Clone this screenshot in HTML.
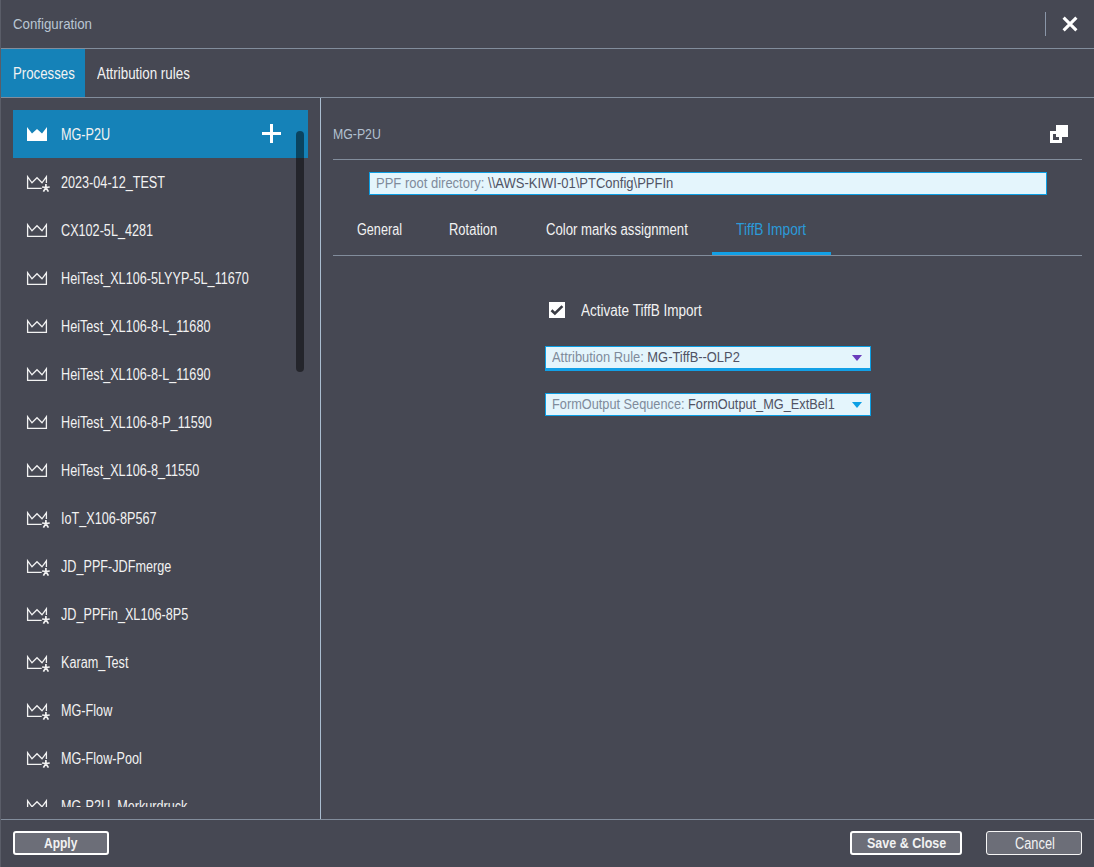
<!DOCTYPE html>
<html><head><meta charset="utf-8">
<style>
*{box-sizing:border-box;margin:0;padding:0}
html,body{width:1094px;height:867px;overflow:hidden;background:#464853}
body{position:relative;font-family:"Liberation Sans",sans-serif;font-size:16px;color:#f2f2f2}
.a{position:absolute}
.t{position:absolute;white-space:nowrap;line-height:16px;transform-origin:0 0;transform:scaleX(0.79)}
.hl{position:absolute;height:1px;background:#828d9c}
.vl{position:absolute;width:1px;background:#868e9b}
.item{position:absolute;left:13px;width:295px;height:48px}
.item .t{left:48px;top:17px}
.item svg{position:absolute;left:13px;top:16px}
.sel{background:#1582b8}
</style></head><body>
<!-- left border -->
<div class="vl" style="left:0;top:0;height:867px;background:#5a5d68"></div>
<!-- title -->
<div class="t" style="left:13px;top:16px;color:#b9c6d3;font-size:15px;transform:scaleX(0.885)">Configuration</div>
<div class="vl" style="left:1045px;top:12px;height:24px;background:#8a96a8"></div>
<svg class="a" style="left:1061px;top:15px" width="18" height="18" viewBox="0 0 18 18"><path d="M2.6 2.6 L15.4 15.4 M15.4 2.6 L2.6 15.4" stroke="#fff" stroke-width="3.1"/></svg>
<div class="hl" style="left:1px;top:48px;width:1093px"></div>
<!-- top tabs -->
<div class="a" style="left:1px;top:49px;width:84px;height:48px;background:#1582b8"></div>
<div class="t" style="left:13px;top:66px;transform:scaleX(0.827)">Processes</div>
<div class="t" style="left:97px;top:66px;transform:scaleX(0.835)">Attribution rules</div>
<div class="hl" style="left:1px;top:97px;width:1093px"></div>
<!-- left panel separator -->
<div class="vl" style="left:320px;top:98px;height:721px;background:#aabdd0"></div>
<!-- list -->
<div id="list">
<div class="a" style="left:0;top:98px;width:320px;height:709px;overflow:hidden">
<div class="item sel" style="top:12px"><svg width="22" height="16" viewBox="0 0 22 16"><path d="M1,15 L1,1 L6,7.5 L11,3 L16,7.5 L21,1 L21,15 Z" fill="#fff"/></svg><div class="t">MG-P2U</div></div>
<div class="item" style="top:60px"><svg width="26" height="20" viewBox="0 0 26 20"><path d="M20.4,9 L20.4,2.8 L16,8.8 L11,3.7 L6,8.8 L1.6,2.8 L1.6,14.3 L15.7,14.3" fill="none" stroke="#f2f2f2" stroke-width="1.3"/><path d="M19.9,9.9 L19.9,13.5 M16.1,13 L19.9,13.5 L23.7,13 M17.4,17.6 L19.9,13.5 L22.4,17.6" fill="none" stroke="#f2f2f2" stroke-width="1.7"/></svg><div class="t">2023-04-12_TEST</div></div>
<div class="item" style="top:108px"><svg width="22" height="16" viewBox="0 0 22 16"><path d="M1.6,14.3 L1.6,2.8 L6,8.8 L11,3.7 L16,8.8 L20.4,2.8 L20.4,14.3 Z" fill="none" stroke="#f2f2f2" stroke-width="1.3"/></svg><div class="t">CX102-5L_4281</div></div>
<div class="item" style="top:156px"><svg width="22" height="16" viewBox="0 0 22 16"><path d="M1.6,14.3 L1.6,2.8 L6,8.8 L11,3.7 L16,8.8 L20.4,2.8 L20.4,14.3 Z" fill="none" stroke="#f2f2f2" stroke-width="1.3"/></svg><div class="t">HeiTest_XL106-5LYYP-5L_11670</div></div>
<div class="item" style="top:204px"><svg width="22" height="16" viewBox="0 0 22 16"><path d="M1.6,14.3 L1.6,2.8 L6,8.8 L11,3.7 L16,8.8 L20.4,2.8 L20.4,14.3 Z" fill="none" stroke="#f2f2f2" stroke-width="1.3"/></svg><div class="t">HeiTest_XL106-8-L_11680</div></div>
<div class="item" style="top:252px"><svg width="22" height="16" viewBox="0 0 22 16"><path d="M1.6,14.3 L1.6,2.8 L6,8.8 L11,3.7 L16,8.8 L20.4,2.8 L20.4,14.3 Z" fill="none" stroke="#f2f2f2" stroke-width="1.3"/></svg><div class="t">HeiTest_XL106-8-L_11690</div></div>
<div class="item" style="top:300px"><svg width="22" height="16" viewBox="0 0 22 16"><path d="M1.6,14.3 L1.6,2.8 L6,8.8 L11,3.7 L16,8.8 L20.4,2.8 L20.4,14.3 Z" fill="none" stroke="#f2f2f2" stroke-width="1.3"/></svg><div class="t">HeiTest_XL106-8-P_11590</div></div>
<div class="item" style="top:348px"><svg width="22" height="16" viewBox="0 0 22 16"><path d="M1.6,14.3 L1.6,2.8 L6,8.8 L11,3.7 L16,8.8 L20.4,2.8 L20.4,14.3 Z" fill="none" stroke="#f2f2f2" stroke-width="1.3"/></svg><div class="t">HeiTest_XL106-8_11550</div></div>
<div class="item" style="top:396px"><svg width="26" height="20" viewBox="0 0 26 20"><path d="M20.4,9 L20.4,2.8 L16,8.8 L11,3.7 L6,8.8 L1.6,2.8 L1.6,14.3 L15.7,14.3" fill="none" stroke="#f2f2f2" stroke-width="1.3"/><path d="M19.9,9.9 L19.9,13.5 M16.1,13 L19.9,13.5 L23.7,13 M17.4,17.6 L19.9,13.5 L22.4,17.6" fill="none" stroke="#f2f2f2" stroke-width="1.7"/></svg><div class="t">IoT_X106-8P567</div></div>
<div class="item" style="top:444px"><svg width="26" height="20" viewBox="0 0 26 20"><path d="M20.4,9 L20.4,2.8 L16,8.8 L11,3.7 L6,8.8 L1.6,2.8 L1.6,14.3 L15.7,14.3" fill="none" stroke="#f2f2f2" stroke-width="1.3"/><path d="M19.9,9.9 L19.9,13.5 M16.1,13 L19.9,13.5 L23.7,13 M17.4,17.6 L19.9,13.5 L22.4,17.6" fill="none" stroke="#f2f2f2" stroke-width="1.7"/></svg><div class="t">JD_PPF-JDFmerge</div></div>
<div class="item" style="top:492px"><svg width="26" height="20" viewBox="0 0 26 20"><path d="M20.4,9 L20.4,2.8 L16,8.8 L11,3.7 L6,8.8 L1.6,2.8 L1.6,14.3 L15.7,14.3" fill="none" stroke="#f2f2f2" stroke-width="1.3"/><path d="M19.9,9.9 L19.9,13.5 M16.1,13 L19.9,13.5 L23.7,13 M17.4,17.6 L19.9,13.5 L22.4,17.6" fill="none" stroke="#f2f2f2" stroke-width="1.7"/></svg><div class="t">JD_PPFin_XL106-8P5</div></div>
<div class="item" style="top:540px"><svg width="26" height="20" viewBox="0 0 26 20"><path d="M20.4,9 L20.4,2.8 L16,8.8 L11,3.7 L6,8.8 L1.6,2.8 L1.6,14.3 L15.7,14.3" fill="none" stroke="#f2f2f2" stroke-width="1.3"/><path d="M19.9,9.9 L19.9,13.5 M16.1,13 L19.9,13.5 L23.7,13 M17.4,17.6 L19.9,13.5 L22.4,17.6" fill="none" stroke="#f2f2f2" stroke-width="1.7"/></svg><div class="t">Karam_Test</div></div>
<div class="item" style="top:588px"><svg width="26" height="20" viewBox="0 0 26 20"><path d="M20.4,9 L20.4,2.8 L16,8.8 L11,3.7 L6,8.8 L1.6,2.8 L1.6,14.3 L15.7,14.3" fill="none" stroke="#f2f2f2" stroke-width="1.3"/><path d="M19.9,9.9 L19.9,13.5 M16.1,13 L19.9,13.5 L23.7,13 M17.4,17.6 L19.9,13.5 L22.4,17.6" fill="none" stroke="#f2f2f2" stroke-width="1.7"/></svg><div class="t">MG-Flow</div></div>
<div class="item" style="top:636px"><svg width="26" height="20" viewBox="0 0 26 20"><path d="M20.4,9 L20.4,2.8 L16,8.8 L11,3.7 L6,8.8 L1.6,2.8 L1.6,14.3 L15.7,14.3" fill="none" stroke="#f2f2f2" stroke-width="1.3"/><path d="M19.9,9.9 L19.9,13.5 M16.1,13 L19.9,13.5 L23.7,13 M17.4,17.6 L19.9,13.5 L22.4,17.6" fill="none" stroke="#f2f2f2" stroke-width="1.7"/></svg><div class="t">MG-Flow-Pool</div></div>
<div class="item" style="top:684px"><svg width="22" height="16" viewBox="0 0 22 16"><path d="M1.6,14.3 L1.6,2.8 L6,8.8 L11,3.7 L16,8.8 L20.4,2.8 L20.4,14.3 Z" fill="none" stroke="#f2f2f2" stroke-width="1.3"/></svg><div class="t">MG-P2U_Merkurdruck</div></div>
</div>
</div>
<!-- plus + scrollbar -->
<div class="a" style="left:262px;top:132px;width:19px;height:3px;background:#fff"></div>
<div class="a" style="left:270px;top:124px;width:3px;height:19px;background:#fff"></div>
<div class="a" style="left:296px;top:131px;width:8px;height:241px;background:rgba(0,0,0,0.48);border-radius:4px"></div>
<!-- right panel -->
<div class="t" style="left:333px;top:126px;color:#b2c0d0;font-size:15px;transform:scaleX(0.82)">MG-P2U</div>
<div class="a" style="left:1050px;top:131px;width:12px;height:12px;border:3px solid #fff"></div>
<div class="a" style="left:1056px;top:125px;width:12px;height:12px;background:#fff"></div>
<div class="hl" style="left:333px;top:159px;width:749px"></div>
<div class="a" style="left:369px;top:172px;width:678px;height:23px;background:#e4f5fc;border:1.5px solid #0c9fe4"></div>
<div class="t" style="left:376px;top:175px;font-size:15px;color:#7f8b9b;transform:scaleX(0.867)">PPF root directory: <span style="color:#505364">\\AWS-KIWI-01\PTConfig\PPFIn</span></div>
<div class="t" style="left:357px;top:222px">General</div>
<div class="t" style="left:449px;top:222px;transform:scaleX(0.81)">Rotation</div>
<div class="t" style="left:546px;top:222px;transform:scaleX(0.822)">Color marks assignment</div>
<div class="t" style="left:736px;top:222px;color:#2b9ad9;transform:scaleX(0.858)">TiffB Import</div>
<div class="hl" style="left:333px;top:255px;width:749px"></div>
<div class="a" style="left:712px;top:252px;width:119px;height:3px;background:#12a0e6"></div>
<!-- checkbox -->
<div class="a" style="left:549px;top:302px;width:16px;height:16px;background:#fff"></div>
<svg class="a" style="left:549px;top:302px" width="16" height="16" viewBox="0 0 16 16"><path d="M2.5,8.2 L5.9,11.5 L13.4,4.1" fill="none" stroke="#3a3c45" stroke-width="2.6"/></svg>
<div class="t" style="left:581px;top:303px;transform:scaleX(0.846)">Activate TiffB Import</div>
<!-- dropdown 1 -->
<div class="a" style="left:545px;top:346px;width:326px;height:25px;background:#e4f5fc;border:1.5px solid #0c9fe4;border-bottom:3px solid #12a0e6"></div>
<div class="t" style="left:552px;top:349px;font-size:15px;color:#7f8b9b;transform:scaleX(0.86)">Attribution Rule: <span style="color:#505364">MG-TiffB--OLP2</span></div>
<svg class="a" style="left:851px;top:354px" width="12" height="8" viewBox="0 0 12 8"><path d="M1,1 L11,1 L6,7 Z" fill="#6a3cbc"/></svg>
<!-- dropdown 2 -->
<div class="a" style="left:545px;top:393px;width:326px;height:23px;background:#e4f5fc;border:1.5px solid #0c9fe4"></div>
<div class="t" style="left:552px;top:396px;font-size:15px;color:#7f8b9b;transform:scaleX(0.85)">FormOutput Sequence: <span style="color:#505364">FormOutput_MG_ExtBel1</span></div>
<svg class="a" style="left:851px;top:401px" width="12" height="8" viewBox="0 0 12 8"><path d="M1,1 L11,1 L6,7 Z" fill="#0c9fe4"/></svg>
<!-- footer -->
<div class="hl" style="left:1px;top:819px;width:1093px"></div>
<div class="a" style="left:13px;top:831px;width:96px;height:24px;background:#6c6e78;border:2px solid #fff;border-radius:3px"></div>
<div class="t" style="left:44px;top:835px;font-weight:bold;font-size:15px;transform:scaleX(0.8)">Apply</div>
<div class="a" style="left:850px;top:831px;width:112px;height:24px;background:#6c6e78;border:2px solid #fff;border-radius:3px"></div>
<div class="t" style="left:867px;top:835px;font-weight:bold;font-size:15px;transform:scaleX(0.834)">Save &amp; Close</div>
<div class="a" style="left:986px;top:831px;width:96px;height:24px;background:#6c6e78;border:1.5px solid #f6f6f6;border-radius:3px"></div>
<div class="t" style="left:1015px;top:836px;font-size:16px;transform:scaleX(0.8)">Cancel</div>
</body></html>
